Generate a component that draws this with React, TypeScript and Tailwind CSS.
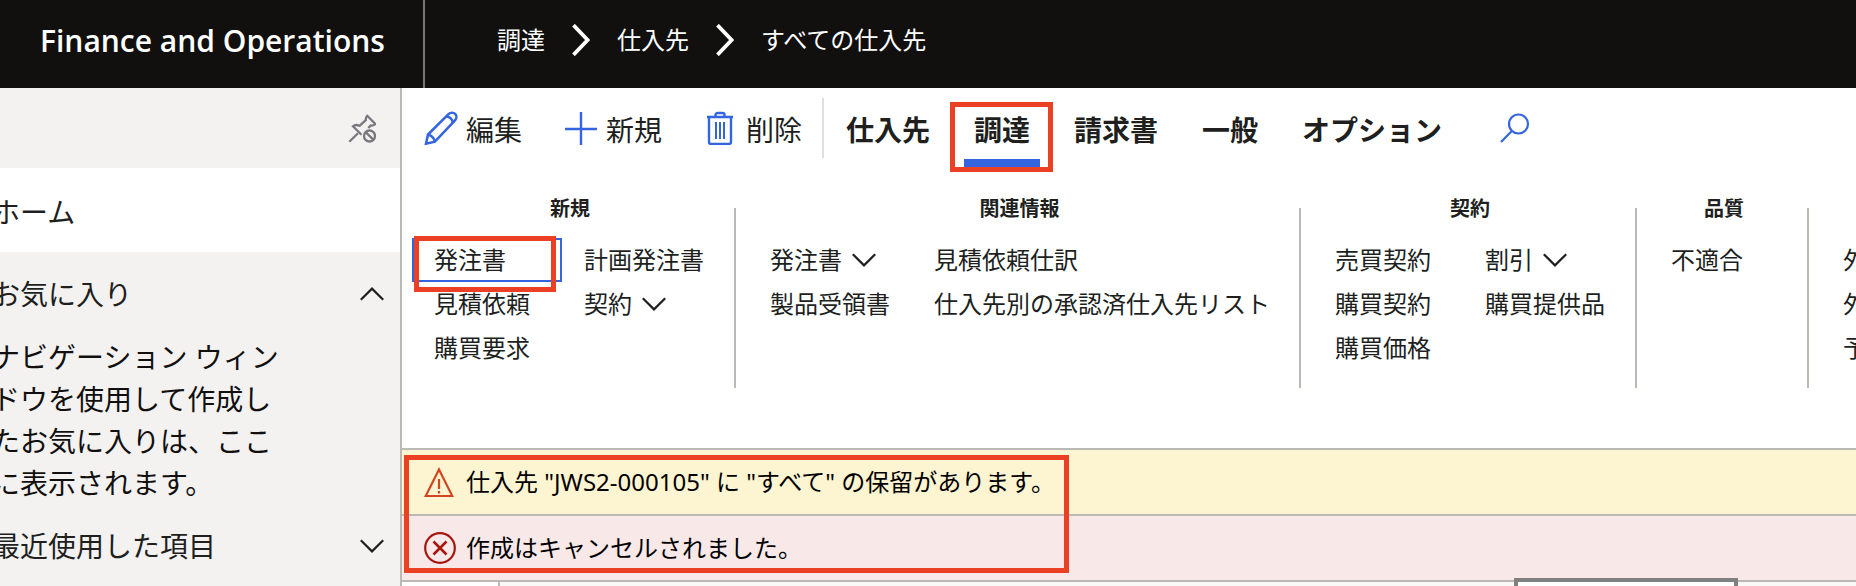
import React from 'react';

type Item = { label: string; menu?: boolean; active?: boolean };
type Group = { title: string; cols: string; items: Item[][] };

const groups: Group[] = [
  {
    title: '新規',
    cols: 'w-[334px] pl-[10px] grid-cols-[150px_1fr]',
    items: [
      [{ label: '発注書', active: true }, { label: '見積依頼' }, { label: '購買要求' }],
      [{ label: '計画発注書' }, { label: '契約', menu: true }],
    ],
  },
  {
    title: '関連情報',
    cols: 'w-[565px] pl-3 grid-cols-[164px_1fr]',
    items: [
      [{ label: '発注書', menu: true }, { label: '製品受領書' }],
      [{ label: '見積依頼仕訳' }, { label: '仕入先別の承認済仕入先リスト' }],
    ],
  },
  {
    title: '契約',
    cols: 'w-[336px] pl-3 grid-cols-[150px_1fr]',
    items: [
      [{ label: '売買契約' }, { label: '購買契約' }, { label: '購買価格' }],
      [{ label: '割引', menu: true }, { label: '購買提供品' }],
    ],
  },
  {
    title: '品質',
    cols: 'w-[172px] pl-3 grid-cols-1',
    items: [[{ label: '不適合' }]],
  },
];

const tabs = ['仕入先', '調達', '請求書', '一般', 'オプション'];

function Mark({ className }: { className: string }) {
  return <span aria-hidden="true" className={`pointer-events-none absolute z-10 border-[5px] border-[#ec4025] ${className}`} />;
}

function Chevron({ up = false }: { up?: boolean }) {
  return (
    <svg width="24" height="14" viewBox="0 0 24 14" fill="none" stroke="#201f1e" strokeWidth="2.2" className="shrink-0">
      <path d={up ? 'M.8 12.8 12 1.6l11.2 11.2' : 'M.8 1.2 12 12.4 23.2 1.2'} />
    </svg>
  );
}

function Crumb() {
  return (
    <svg width="18" height="32" viewBox="0 0 18 32" fill="none" stroke="#fff" strokeWidth="3.8" className="shrink-0">
      <path d="M1.5 1.2 15.600 16 1.5 30.8" />
    </svg>
  );
}

function PencilIcon() {
  return (
    <svg width="34" height="34" viewBox="0 0 34 34" fill="none" stroke="#3464e0" strokeWidth="2.5">
      <path d="M4 23.5 24.5 3.2c2-2 4.900-2 6.600-.3 1.700 1.700 1.800 4.500-.1 6.500L10.900 30.600 2 32.700Z" />
      <path d="M22.300 5.300c3.600.6 6 3 6.700 6.700M4.200 23.500c3.200 1 5.800 3.500 6.700 7.100" />
    </svg>
  );
}

function PlusIcon() {
  return (
    <svg width="34" height="34" viewBox="0 0 34 34" fill="none" stroke="#3464e0" strokeWidth="2.4">
      <path d="M17 1v33M1 18h32" />
    </svg>
  );
}

function TrashIcon() {
  return (
    <svg width="28" height="34" viewBox="0 0 28 34" fill="none" stroke="#3464e0" strokeWidth="2.4">
      <path d="M1 6h26M9.500 6V4a2 2 0 0 1 2-2h5a2 2 0 0 1 2 2v2M3 6v25a2 2 0 0 0 2 2h18a2 2 0 0 0 2-2V6" />
      <path d="M10 11v17M14 11v17M18 11v17" strokeWidth="2" />
    </svg>
  );
}

function PinIcon() {
  return (
    <svg width="28" height="29" viewBox="0 0 28 29" fill="none" stroke="#79777d" strokeWidth="2.300">
      <path d="M1.300 27.800 10 19.200M13.500 20.700 5 12.300c1.500-1.400 4.200-1.500 6.500-.5L17.800 6c-.2-1.300.2-2.800 1.500-4.200l8 8.200c-1.400 1.300-3 1.700-4.500 1.500L20.300 14" />
      <circle cx="21.500" cy="22" r="5.500" />
      <path d="m17.700 18.100 7.800 7.800" />
    </svg>
  );
}

export default function App() {
  return (
    <div className="flex h-screen flex-col overflow-hidden bg-white font-['Noto_Sans','Noto_Sans_CJK_JP',sans-serif] text-[#201f1e]">
      <header className="flex h-[88px] shrink-0 bg-[#11100f] text-white">
        <div className="flex w-[425px] shrink-0 items-center border-r-2 border-[#797775] pb-2 pl-10 font-['Open_Sans',sans-serif] text-[30px] font-semibold whitespace-nowrap">
          Finance and Operations
        </div>
        <nav className="flex items-center gap-[27px] pb-2 pl-[72px] text-2xl whitespace-nowrap">
          <a href="#procurement">調達</a>
          <Crumb />
          <a href="#vendors">仕入先</a>
          <Crumb />
          <a href="#all-vendors">すべての仕入先</a>
        </nav>
      </header>

      <div className="flex min-h-0 flex-1">
        <aside className="w-[402px] shrink-0 overflow-hidden border-r-2 border-[#bab9b4] bg-[#f3f2f1] text-[28px] leading-[42px]">
          <div className="flex h-20 items-center justify-end pr-6">
            <button aria-label="ナビゲーションの固定を解除">
              <PinIcon />
            </button>
          </div>
          <a href="#home" className="flex h-[84px] items-center bg-white pt-1">
            <span className="-ml-2">ホーム</span>
          </a>
          <button className="flex h-[84px] w-full items-center justify-between pr-4">
            <span className="-ml-2">お気に入り</span>
            <Chevron up />
          </button>
          <p className="-ml-2 w-[292px] text-[#11100f]">
            ナビゲーション ウィン
            <br />
            ドウを使用して作成し
            <br />
            たお気に入りは、ここ
            <br />
            に表示されます。
          </p>
          <button className="flex h-[84px] w-full items-center justify-between pr-4">
            <span className="-ml-2">最近使用した項目</span>
            <Chevron />
          </button>
        </aside>

        <main className="flex min-w-0 flex-1 flex-col">
          <div className="flex h-20 shrink-0 items-center pl-[22px] text-[28px] leading-[42px] whitespace-nowrap">
            <button className="flex items-center gap-2">
              <PencilIcon />
              <span className="pt-1">編集</span>
            </button>
            <button className="ml-[42px] flex items-center gap-2">
              <PlusIcon />
              <span className="pt-1">新規</span>
            </button>
            <button className="ml-11 flex items-center gap-3">
              <TrashIcon />
              <span className="pt-1">削除</span>
            </button>
            <div className="ml-5 h-[60px] w-[2px] bg-[#e1dfdd]" />
            <div role="tablist" className="ml-[22px] flex gap-11 font-bold">
              {tabs.map((t) => (
                <button key={t} role="tab" aria-selected={t === '調達'} className="relative pt-1">
                  {t}
                  {t === '調達' && (
                    <>
                      <span className="absolute -inset-x-[10px] -bottom-4 h-2 bg-[#3464e0]" />
                      <Mark className="-top-[3px] -bottom-[21px] -left-6 w-[103px]" />
                    </>
                  )}
                </button>
              ))}
            </div>
            <button aria-label="検索" className="ml-[58px]">
              <svg width="30" height="30" viewBox="0 0 30 30" fill="none" stroke="#3464e0" strokeWidth="2.2">
                <circle cx="18.500" cy="11" r="9.500" />
                <path d="M1 29 11.800 17.900" />
              </svg>
            </button>
          </div>

          <div className="flex h-[280px] shrink-0 overflow-hidden pt-6">
            {groups.map((g) => (
              <section key={g.title} className="relative shrink-0">
                <h2 className="pt-[2px] pl-[2px] text-center text-xl leading-[30px] font-bold">{g.title}</h2>
                <div className={`grid pt-[14px] ${g.cols}`}>
                  {g.items.map((col, i) => (
                    <div key={i} className="flex flex-col">
                      {col.map((it) => (
                        <button
                          key={it.label}
                          className={`relative flex h-11 items-center gap-[10px] border-2 pl-5 text-2xl whitespace-nowrap ${it.active ? 'border-[#3464e0]' : 'border-transparent'}`}
                        >
                          {it.label}
                          {it.menu && <Chevron />}
                          {it.active && <Mark className="-top-1 left-0 h-14 w-[142px]" />}
                        </button>
                      ))}
                    </div>
                  ))}
                </div>
                <span className="absolute top-4 right-0 h-[180px] w-[2px] bg-[#bab9b4]" />
              </section>
            ))}
            <section className="flex shrink-0 flex-col pt-[46px] pl-[34px] text-2xl leading-[44px]">
              <button>外</button>
              <button>外</button>
              <button>予</button>
            </section>
          </div>

          <div className="relative shrink-0 border-t-2 border-[#bab9b4] text-2xl text-black">
            <div role="status" className="flex h-16 items-center gap-3 bg-[#fdf4d1] pl-[22px]">
              <svg width="30" height="30" viewBox="0 0 30 30" fill="none" stroke="#d2451e" strokeWidth="2.2" className="shrink-0">
                <path d="M15 2.500 28.300 29H1.700ZM15 12v10M15 24v2.500" />
              </svg>
              <span>仕入先 "JWS2-000105" に "すべて" の保留があります。</span>
            </div>
            <div role="alert" className="flex h-[68px] items-center gap-[10px] border-y-2 border-[#bab9b4] bg-[#f8e8e8] pl-[22px]">
              <svg width="32" height="32" viewBox="0 0 32 32" fill="none" stroke="#a4160e" strokeWidth="2.2" className="shrink-0">
                <circle cx="16" cy="16" r="14.800" />
                <path d="m9.500 9.500 13 13M22.500 9.500l-13 13" strokeWidth="2.600" />
              </svg>
              <span>作成はキャンセルされました。</span>
            </div>
            <Mark className="top-[5px] left-[2px] h-[118px] w-[665px]" />
          </div>

          <div className="flex min-h-0 flex-1">
            <div className="w-[98px] shrink-0 border-r-2 border-[#bab9b4]" />
            <div className="flex-1 bg-[#faf9f8] pl-[1014px]">
              <div className="relative -mt-1 h-16 w-56 border-4 border-[#808080] bg-white" />
            </div>
          </div>
        </main>
      </div>
    </div>
  );
}
